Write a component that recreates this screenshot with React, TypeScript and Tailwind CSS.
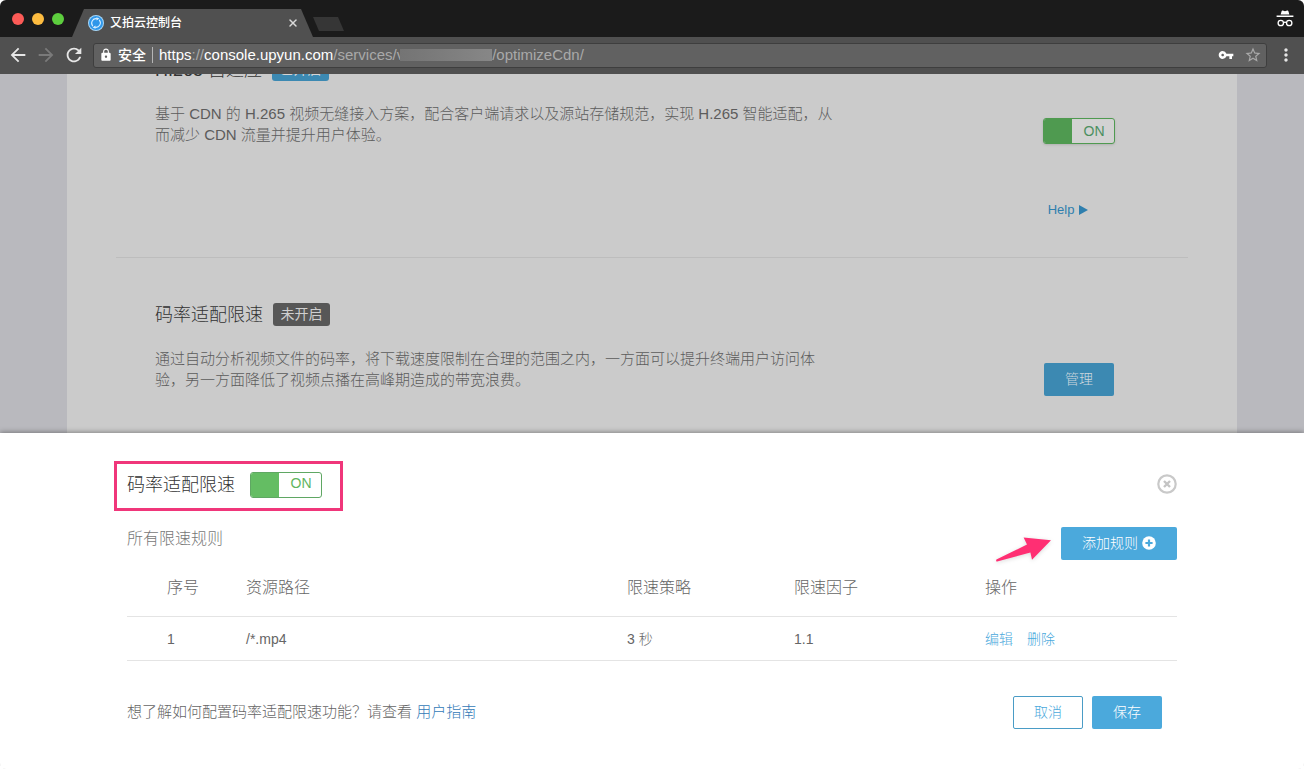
import React from "react";
import {
  MdArrowBack,
  MdArrowForward,
  MdLock,
  MdMoreVert,
  MdRefresh,
  MdStarBorder,
  MdVpnKey,
} from "react-icons/md";
import { X } from "lucide-react";

const rules = [{ id: 1, path: "/*.mp4", strategy: "3 秒", factor: "1.1" }];

function Favicon() {
  return (
    <svg viewBox="0 0 16 16" className="size-4 shrink-0" fill="none">
      <circle cx="8" cy="8" r="8" fill="#a6d8fa" />
      <circle cx="8" cy="8" r="7" fill="#2f97ea" />
      <path
        d="M4.6 10.8A4.4 4.4 0 0 1 9 3.8M11.4 5.2A4.4 4.4 0 0 1 7 12.2"
        stroke="#d6eeff"
        strokeWidth="1.1"
        strokeLinecap="round"
      />
      <path d="M8.4 2.2l3 1.4-2.8 1.8zM7.6 13.8l-3-1.4 2.8-1.8z" fill="#d6eeff" />
    </svg>
  );
}

function IncognitoIcon() {
  return (
    <svg viewBox="0 0 18 18" className="h-[18px] w-[18px]" fill="none">
      <path
        d="M5.6 1.2c.2-.6.7-.8 1.2-.6L9 1.2l2.2-.6c.5-.2 1 0 1.2.6l1 3.4H4.6zM.6 5.4h16.8v1.6H.6z"
        fill="#fff"
      />
      <circle cx="4.8" cy="13" r="2.7" stroke="#fff" strokeWidth="1.3" />
      <circle cx="13.2" cy="13" r="2.7" stroke="#fff" strokeWidth="1.3" />
      <path d="M7.4 12.7c1-.7 2.2-.7 3.2 0" stroke="#fff" strokeWidth="1.3" />
    </svg>
  );
}

function TabStrip() {
  return (
    <div className="flex h-[37px] items-end bg-[#1b1b1b]">
      <div className="flex h-full items-center gap-2 pl-3">
        <span className="size-3 rounded-full bg-[#fc5b57]" />
        <span className="size-3 rounded-full bg-[#fdbc40]" />
        <span className="size-3 rounded-full bg-[#5dce3e]" />
      </div>
      <div className="ml-2 flex h-7 w-[241px] items-center bg-[#505050] pr-3.5 pl-4 [clip-path:polygon(12px_0,calc(100%-12px)_0,100%_100%,0_100%)]">
        <Favicon />
        <span className="ml-1.5 flex-1 text-xs font-medium text-white">
          又拍云控制台
        </span>
        <button aria-label="关闭标签页" className="text-[#d8d8d8]">
          <X className="size-3" strokeWidth={3} />
        </button>
      </div>
      <button
        aria-label="新标签页"
        className="mb-1.5 h-3.5 w-[31px] bg-[#363636] [clip-path:polygon(0_0,25px_0,100%_100%,6px_100%)]"
      />
      <div className="mr-2.5 flex h-full flex-1 items-center justify-end">
        <IncognitoIcon />
      </div>
    </div>
  );
}

function Toolbar() {
  return (
    <div className="flex h-[37px] items-center bg-[#505050] pb-px pl-[7px] text-[#e6e6e6]">
      <div className="flex items-center gap-1.5">
        <button aria-label="后退">
          <MdArrowBack className="size-[22px]" />
        </button>
        <button aria-label="前进" className="text-[#7a7a7a]">
          <MdArrowForward className="size-[22px]" />
        </button>
        <button aria-label="重新加载">
          <MdRefresh className="size-[22px]" />
        </button>
      </div>
      <div className="ml-2 flex h-[25px] flex-1 items-center rounded-[3px] border border-[#3e3e3e] bg-[#616161] px-1 text-[15px] text-[#a9a9a9]">
        <MdLock className="size-4 p-px text-white" />
        <span className="ml-1 text-sm font-medium text-white">安全</span>
        <span className="mx-1.5 h-4 w-px bg-[#b5b5b5]" />
        <span className="flex flex-1 items-center leading-5">
          <span className="text-white">https</span>://
          <span className="text-white">console.upyun.com</span>
          /services/v
          <span className="-ml-1 h-3 w-[92px] bg-linear-to-r from-[#747474] via-[#7d7d7d] to-[#878787]" />
          /optimizeCdn/
        </span>
        <button aria-label="密码" className="text-white">
          <MdVpnKey className="size-4" />
        </button>
        <button aria-label="收藏" className="ml-2.5">
          <MdStarBorder className="size-[18px]" />
        </button>
      </div>
      <button aria-label="菜单" className="mr-2 ml-[9px]">
        <MdMoreVert className="size-5" />
      </button>
    </div>
  );
}

function Switch({ label, dimmed = false }) {
  return (
    <label
      className={
        dimmed
          ? "flex h-[26px] w-[72px] overflow-hidden rounded-[3px] border border-[#4f9a50] bg-[#d2d2d2] text-sm text-[#4b8f60] shadow-sm"
          : "flex h-[26px] w-[72px] overflow-hidden rounded-[3px] border border-[#5fa763] bg-white text-sm text-[#5fb55f]"
      }
    >
      <input
        type="checkbox"
        defaultChecked
        aria-label={label}
        className={
          dimmed
            ? "w-7 appearance-none bg-[#4f9a50]"
            : "w-7 appearance-none bg-[#64bd63]"
        }
      />
      <span
        className={
          dimmed
            ? "flex-1 pl-0.5 text-center leading-6"
            : "flex-1 pl-0.5 text-center leading-5"
        }
      >
        ON
      </span>
    </label>
  );
}

function Feature({ title, badge, badgeClass, desc, children }) {
  return (
    <section className="flex justify-between border-b border-[#bdbdbd] px-[39px] pt-[45px]">
      <div className="max-w-[682px]">
        <div className="flex h-[23px] items-center gap-2.5">
          <h2 className="text-lg leading-6 text-[#333]">{title}</h2>
          <span className={badgeClass}>{badge}</span>
        </div>
        <p className="mt-[22px] text-[15px] leading-[21px] text-[#5c5c5c]">
          {desc}
        </p>
      </div>
      <div className="flex w-[140px] flex-col items-center pt-15">
        {children}
      </div>
    </section>
  );
}

function RulesPanel() {
  return (
    <div className="relative bg-white px-8 pt-7 pb-10 shadow-[0_-1px_5px_rgba(0,0,0,0.35)]">
      <div className="mx-auto max-w-[1050px]">
        <div className="flex items-center justify-between">
          {/* Wyróżniony nagłówek z przełącznikiem */}
          <div className="-ml-[13px] flex h-[50px] items-center gap-[15px] border-3 border-[#f0367a] pr-[18px] pb-px pl-2.5">
            <h2 className="text-lg text-[#333]">码率适配限速</h2>
            <Switch label="码率适配限速" />
          </div>
          <button aria-label="关闭" className="pb-1">
            <svg viewBox="0 0 20 20" className="size-5" fill="none">
              <circle cx="10" cy="10" r="8.7" stroke="#c9c9c9" strokeWidth="2.2" />
              <path
                d="M7 7l6 6M13 7l-6 6"
                stroke="#c4c4c4"
                strokeWidth="2.4"
              />
            </svg>
          </button>
        </div>

        <div className="mt-4 flex h-[33px] items-center">
          <h3 className="flex-1 self-start text-base leading-6 text-[#777]">
            所有限速规则
          </h3>
          <svg
            viewBox="0 0 58 33"
            className="mr-[9px] h-[33px] w-[58px] overflow-visible drop-shadow-sm"
          >
            <path
              d="M2.4 32.6L33 17.6L29.6 10.4L57 13.2L38 32.8L36.4 25.4L3.2 34.6Q1.6 34.6 2.4 32.6z"
              fill="#ff2f73"
            />
          </svg>
          <button className="flex h-[33px] w-[116px] items-center justify-center gap-1 rounded-xs bg-[#4ba9dc] text-sm text-white">
            添加规则
            <svg viewBox="0 0 14 14" className="size-3.5">
              <circle cx="7" cy="7" r="6.8" fill="#fff" />
              <path d="M7 3.4v7.2M3.4 7h7.2" stroke="#4ba9dc" strokeWidth="2.2" />
            </svg>
          </button>
        </div>

        <table className="w-full table-fixed text-left text-[#666]">
          <thead>
            <tr className="h-[57px] border-b border-[#e4e4e4] text-base">
              <th className="w-[119px] pl-10 font-light">序号</th>
              <th className="font-light">资源路径</th>
              <th className="w-[167px] font-light">限速策略</th>
              <th className="w-[191px] font-light">限速因子</th>
              <th className="w-48 font-light">操作</th>
            </tr>
          </thead>
          <tbody>
            {rules.map((rule) => (
              <tr
                key={rule.id}
                className="h-11 border-b border-[#e4e4e4] text-sm"
              >
                <td className="pl-10">{rule.id}</td>
                <td>{rule.path}</td>
                <td>{rule.strategy}</td>
                <td>{rule.factor}</td>
                <td>
                  <div className="flex gap-3.5 text-[#4ba9dc]">
                    <a href="#edit">编辑</a>
                    <a href="#delete">删除</a>
                  </div>
                </td>
              </tr>
            ))}
          </tbody>
        </table>

        <div className="mt-[35px] flex items-center gap-[9px] pr-[15px]">
          <p className="flex-1 text-[15px] text-[#666]">
            想了解如何配置码率适配限速功能？请查看{" "}
            <a href="#guide" className="text-[#337ab7]">
              用户指南
            </a>
          </p>
          <button className="h-[33px] w-[70px] rounded-xs border border-[#4a9cc6] pb-0.5 text-sm text-[#4ba9dc]">
            取消
          </button>
          <button className="h-[33px] w-[70px] rounded-xs bg-[#4ba9dc] pb-0.5 text-sm text-white">
            保存
          </button>
        </div>
      </div>
    </div>
  );
}

export default function App() {
  return (
    <div className="flex h-screen flex-col overflow-hidden rounded-md font-['Liberation_Sans','Noto_Sans_CJK_SC',sans-serif] font-light">
      <TabStrip />
      <Toolbar />
      <main className="min-h-0 flex-1 overflow-hidden bg-[#b9b9be]">
        {/* Strona pod panelem, przewinięta w dół */}
        <div className="mx-auto -mt-[61px] min-h-full max-w-[1170px] bg-[#cbcbcb] px-[49px]">
          <Feature
            title="H.265 自适应"
            badge="已开启"
            badgeClass="w-[57px] rounded-[3px] bg-[#3c89b2] text-center text-sm leading-[23px] font-normal text-[#d5d5d5]"
            desc="基于 CDN 的 H.265 视频无缝接入方案，配合客户端请求以及源站存储规范，实现 H.265 智能适配，从而减少 CDN 流量并提升用户体验。"
          >
            <Switch label="H.265 自适应" dimmed />
            <a
              href="#help"
              className="mt-14 mr-[22px] mb-[37px] flex items-center gap-[5px] text-[13px] leading-5 text-[#2f7fae]"
            >
              Help
              <svg viewBox="0 0 9 10" className="h-2.5 w-[9px]">
                <path d="M0 0l9 5-9 5z" fill="#2f7fae" />
              </svg>
            </a>
          </Feature>
          <Feature
            title="码率适配限速"
            badge="未开启"
            badgeClass="w-[57px] rounded-[3px] bg-[#575757] text-center text-sm leading-[23px] font-normal text-[#cfcfcf]"
            desc="通过自动分析视频文件的码率，将下载速度限制在合理的范围之内，一方面可以提升终端用户访问体验，另一方面降低了视频点播在高峰期造成的带宽浪费。"
          >
            <button className="mb-20 h-[33px] w-[70px] shrink-0 rounded-xs bg-[#3c89b2] pb-0.5 text-sm text-[#cdd8de]">
              管理
            </button>
          </Feature>
        </div>
      </main>
      <RulesPanel />
    </div>
  );
}
